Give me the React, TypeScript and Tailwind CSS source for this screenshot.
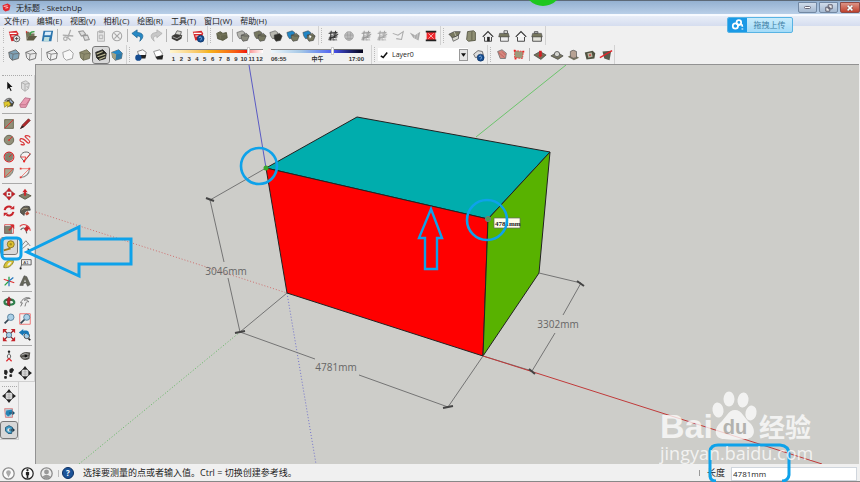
import type { ReactNode } from 'react';

const cube = 'M2 5 10 2 14 6 13 12 6 14 3 11Z';
const cubeEdges = 'M2 5 7 7 14 6M7 7 6 14';

function house(fill: string, body: string) {
  return (
    <>
      <path d="M4 8V14H12V8" fill={body} stroke="#444" strokeWidth="1.1" />
      <path d="M2 9 8 3 14 9" fill={fill} stroke="#333" strokeWidth="1.3" />
    </>
  );
}

function sandbox(color: string) {
  return (
    <>
      <path d="M4 3H13V7L11 9 13 13H3V10L5 7Z" fill={color} opacity=".5" />
      <path d="M3 5 13 4M4 10 13 9M6 2 5 13M11 2 9 13M3 12 14 6" stroke={color} strokeWidth="1.1" />
      <path d="M6 6H8M9 11H11" stroke="#eee" strokeWidth="1.3" />
    </>
  );
}

function solid(front: string, back: string) {
  return (
    <>
      <path d="M1 4 7 2 10 4 9 10 4 11 2 8Z" fill={back} stroke="#444" strokeWidth=".6" />
      <path d="M6 7 12 5 15 8 13 13 8 14 6 11Z" fill={front} stroke="#444" strokeWidth=".7" />
      <path d="M6 7 10 8 15 8" stroke="#333" strokeWidth=".5" />
    </>
  );
}

function styled(fill: string, edge = '#666') {
  return (
    <>
      <path d={cube} fill={fill} stroke={edge} />
      <path d={cubeEdges} stroke={edge} strokeWidth=".8" />
    </>
  );
}

const globe = (
  <>
    <circle cx="11" cy="11" r="4" fill="#164d91" stroke="#0b2c59" strokeWidth=".6" />
    <path d="M9 10 11 9 12 11 11 13" stroke="#8db9e6" strokeWidth="1" />
  </>
);

const icons: Record<string, ReactNode> = {
  New: (
    <>
      <path d="M2 3 11 2 13 5 12 13 5 14Z" fill="#d8282c" />
      <path d="M3 5 11 5M5 8H9" stroke="#fff" strokeWidth="1.3" />
      <circle cx="11" cy="11" r="3.6" fill="#eee" stroke="#555" />
      <path d="M11 9V13M9 11H13" stroke="#444" />
    </>
  ),
  Open: (
    <>
      <path d="M2 3H6L7 5H12V8H5L3 13Z" fill="#77745a" />
      <path d="M5 8H15L11 13H3Z" fill="#5f5c45" />
      <path d="M7 7C7 3 9 3 12 3" stroke="#349b3f" strokeWidth="1.6" />
      <path d="M2 2 4 3 3 5Z" fill="#d22" />
    </>
  ),
  Save: (
    <>
      <path d="M4 2H15L13 14H2Z" fill="#2b75ad" />
      <path d="M6 3H13L12 7H5Z" fill="#d9edfb" />
      <path d="M5 9H11L10 14H4Z" fill="#bdd" />
    </>
  ),
  Cut: (
    <>
      <path d="M11 1 8 9M2 7 14 8M7 9 11 13" stroke="#aaa" strokeWidth="1.5" />
      <circle cx="5" cy="11" r="2" stroke="#aaa" strokeWidth="1.3" />
    </>
  ),
  Copy: <path d="M2 3 7 2 10 6 5 8ZM7 8 12 7 14 12 9 13Z" fill="#ddd" stroke="#999" strokeWidth="1.2" />,
  Paste: (
    <>
      <path d="M4 3H12V14H4ZM6 2H10V4H6Z" fill="#e2e2e2" stroke="#b0b0b0" />
      <path d="M6 7H10V11H6Z" stroke="#b0b0b0" />
    </>
  ),
  Erase: (
    <>
      <circle cx="8" cy="8" r="5.4" stroke="#a5a5a5" strokeWidth="1.2" />
      <path d="M5 5 11 11M11 5 5 11" stroke="#a5a5a5" strokeWidth="1.3" />
    </>
  ),
  Undo: <path d="M1 5 7 1V4C14 4 16 9 10 14 12 9 10 8 7 8V10Z" fill="#2789c5" stroke="#1a6191" strokeWidth=".8" />,
  Redo: <path d="M15 5 9 1V4C2 4 0 9 6 14 4 9 6 8 9 8V10Z" fill="#c8c8c8" stroke="#aaa" strokeWidth=".8" />,
  Print: (
    <>
      <path d="M2 8 7 5 14 7 13 11 8 14 2 11Z" fill="#3b3a36" />
      <path d="M6 6 8 2 13 3 12 7Z" fill="#d4d4cf" stroke="#333" strokeWidth=".7" />
      <path d="M3 9 8 11 13 8" stroke="#aaa" />
    </>
  ),
  'Model info': (
    <>
      <path d="M2 3 12 2 14 5 11 12 5 13Z" fill="#d8282c" />
      <path d="M3 5 12 5M5 8H9" stroke="#fff" strokeWidth="1.4" />
      {globe}
    </>
  ),
  'Outer shell': (
    <>
      <path d="M2 5 6 3 9 5 13 4 14 10 9 13 3 11Z" fill="#67684f" stroke="#55563f" />
      <path d="M2 5 6 7 13 6M6 7V12" stroke="#7d7d62" strokeWidth=".8" />
    </>
  ),
  Intersect: solid('#8a8a7d', '#b5b5af'),
  Union: solid('#777860', '#777860'),
  Subtract: solid('#30302a', '#b8b8b0'),
  Trim: solid('#77785f', '#2186c5'),
  Split: (
    <>
      {solid('#77785f', '#2186c5')}
      <path d="M8 7 11 8 9 11Z" fill="#fff" />
    </>
  ),
  'From contours': sandbox('#333'),
  'From scratch': (
    <>
      <circle cx="8" cy="8" r="5" fill="#bbb" stroke="#aaa" />
      <path d="M3 7H13M4 11H12M6 3 7 13M10 3 9 13" stroke="#999" strokeWidth=".7" />
    </>
  ),
  Smoove: sandbox('#999'),
  Stamp: sandbox('#a5a5a5'),
  Drape: <path d="M2 5 8 7 14 3 12 12 6 11" stroke="#aaa" strokeWidth="1.2" />,
  'Add detail': (
    <>
      <path d="M2 4 8 7 14 3 12 13 6 10Z" fill="#aaa" />
      <path d="M8 7 7 11M11 5 10 12" stroke="#d7d7d7" strokeWidth=".7" />
    </>
  ),
  'Flip edge': (
    <>
      <path d="M3 3H13V13H3Z" fill="#ee252b" />
      <path d="M2 3H14M2 13H14" stroke="#222" strokeWidth="1.8" />
      <path d="M5 5 11 11M11 5 5 11" stroke="#f8bcbc" strokeWidth="1" />
    </>
  ),
  Iso: (
    <>
      <path d="M4 8 6 14 12 11V6L8 9Z" fill="#d8d8cf" stroke="#666" />
      <path d="M1 6 7 3 14 3 12 7 5 10Z" fill="#77775e" stroke="#444" strokeWidth=".8" />
      <path d="M7 3 9 8" stroke="#c4c4b3" />
    </>
  ),
  Top: (
    <>
      <path d="M4 3 11 2 13 4V13L5 14 3 12Z" fill="#8f8f74" stroke="#555542" />
      <path d="M9 3V13" stroke="#5f5f48" />
    </>
  ),
  Front: (
    <>
      {house('#eee', '#eee')}
      <path d="M7 9H10V14H7Z" fill="#222" />
    </>
  ),
  Right: (
    <>
      <path d="M4 8H13V14H4Z" fill="#eee" stroke="#555" />
      <path d="M8 2H12V5H8Z" fill="#eee" stroke="#555" />
      <path d="M3 5H13L14 9H2Z" fill="#777760" stroke="#444" strokeWidth=".7" />
    </>
  ),
  Back: house('#f7f7f7', '#f2f2f2'),
  Left: (
    <>
      <path d="M3 8H13V14H3Z" fill="#e2e2da" stroke="#444" />
      <path d="M5 3H9V5H5Z" fill="#ccc" stroke="#555" />
      <path d="M3 5H13L14 9H2Z" fill="#77775e" stroke="#444" strokeWidth=".7" />
    </>
  ),
  'X-ray': styled('#7fa3b8'),
  'Back edges': styled('#e9e9e9'),
  Wireframe: styled('none'),
  'Hidden line': <path d={cube} fill="#f8f8f8" stroke="#999" />,
  Shaded: styled('#8f8d6f', '#6c6a52'),
  Textured: (
    <>
      <path d={cube} fill="#25251e" stroke="#222" />
      <path d="M3 7 10 4M4 10 13 7M6 13 13 10" stroke="#b8b592" strokeWidth="1.4" />
    </>
  ),
  Monochrome: (
    <>
      {styled('#c7c6b4')}
      <path d="M2 5 10 2 14 6 7 7Z" fill="#2388c9" />
      <path d="M7 7 14 6 13 12 6 14Z" fill="#2f79a7" />
      <path d="M2 5 7 7 6 14 3 11Z" fill="#a3a284" />
    </>
  ),
  'Shadow settings': (
    <>
      <path d="M4 4 10 2 14 5 13 9 6 10Z" fill="#fafafa" stroke="#777" />
      <path d="M6 8 14 8 13 12 6 12Z" fill="#222" />
      <circle cx="5" cy="11" r="3.6" fill="#164d91" />
    </>
  ),
  Shadows: (
    <>
      <path d="M3 4 10 2 13 6 12 11 6 11Z" fill="#fff" stroke="#888" />
      <path d="M5 10 14 8 13 13 7 13Z" fill="#222" />
    </>
  ),
  'Layer manager': (
    <>
      <path d="M3 7 8 3 13 4 14 8 5 11Z" fill="#ddd" stroke="#666" />
      {globe}
    </>
  ),
  'Section plane': (
    <>
      <path d="M3 4 8 2 13 6 12 12 6 12Z" fill="#d5877e" stroke="#777" />
      <path d="M4 5 11 11M8 4 12 8" stroke="#b7524f" strokeWidth=".8" />
    </>
  ),
  'Section cuts': (
    <>
      <path d="M3 3 13 4 12 12 3 11Z" fill="#9c9a7b" stroke="#e33" strokeDasharray="2 1" />
      <path d="M2 2H4V4H2ZM12 3H14V5H12ZM3 11H5V13H3Z" fill="#e22" />
    </>
  ),
  'Drop in': (
    <>
      <path d="M1 8 8 4 15 8 9 13Z" fill="#747359" stroke="#444" strokeWidth=".8" />
      <path d="M7 3H10V8H11L8 11 6 8H7Z" fill="#cf2024" />
    </>
  ),
  'Joint push': (
    <>
      <path d="M1 9 8 5 15 9 9 13Z" fill="#77755f" stroke="#444" strokeWidth=".8" />
      <circle cx="8" cy="7" r="3" fill="#d5d5d0" stroke="#555" />
    </>
  ),
  Cylinder: (
    <>
      <path d="M2 10 8 7 15 11 9 14Z" fill="#77755f" />
      <path d="M5 4Q8 1 12 4V11Q8 13 5 10Z" fill="#b7a293" stroke="#555" strokeWidth=".8" />
    </>
  ),
  Face: (
    <>
      <path d="M2 5 11 3 14 6 13 12 4 13Z" fill="#4e5140" />
      <path d="M5 6 10 5 11 10 6 11Z" fill="#b9b29b" />
      <path d="M7 7H9V9H7Z" fill="#c44" />
    </>
  ),
  Slice: (
    <>
      <path d="M4 4 14 3 12 14 6 12Z" fill="#5a5c4d" />
      <path d="M1 11 15 3" stroke="#e5252a" strokeWidth="1.4" />
    </>
  ),
  Select: <path d="M6 3V12L8 10 10 14 11 13 9 9 12 9Z" fill="#111" />,
  Component: (
    <>
      <path d="M4 4 9 2 13 5 12 11 8 14 4 11Z" fill="#ddd" stroke="#aaa" />
      <path d="M4 4 8 6 13 5M8 6V14M10 8 11 10" stroke="#aaa" />
    </>
  ),
  Paint: (
    <>
      <path d="M5 5 10 3 14 7 12 12 7 12Z" fill="#45443a" />
      <path d="M3 6Q7 1 11 4" stroke="#777" strokeWidth="1.4" />
      <path d="M2 7 8 6 10 10 6 13 6 10 3 13Z" fill="#e2c92d" stroke="#796c1d" strokeWidth=".6" />
      <path d="M9 5 12 8" stroke="#98aaca" strokeWidth="2" />
    </>
  ),
  Eraser: (
    <>
      <path d="M2 10 8 2 14 3 9 13 3 13Z" fill="#e99bb2" stroke="#a95c75" strokeWidth=".8" />
      <path d="M2 10 9 10 14 3" stroke="#b96780" strokeWidth=".8" />
    </>
  ),
  Rectangle: (
    <>
      <path d="M3 3H13V13H3Z" fill="#918f77" stroke="#66644e" />
      <path d="M3 13 13 3" stroke="#e1262d" />
    </>
  ),
  Line: (
    <>
      <path d="M3 13 5 9 12 2 14 4 7 11Z" fill="#b3262a" stroke="#5e1b1b" strokeWidth=".8" />
      <path d="M2 14 5 10 7 11Z" fill="#222" />
    </>
  ),
  Circle: (
    <>
      <circle cx="8" cy="8" r="5.4" fill="#929079" stroke="#625f4d" />
      <path d="M8 8 12 4" stroke="#e22" />
      <circle cx="8" cy="8" r="1" fill="#e22" />
    </>
  ),
  Freehand: <path d="M3 13C10 15 7 11 4 10S2 5 6 7 11 13 13 11 8 5 8 4 12 2 14 5" stroke="#d83437" strokeWidth="1.3" />,
  Polygon: (
    <>
      <circle cx="8" cy="8" r="5.6" stroke="#d22" strokeWidth="1.2" />
      <path d="M8 3 12 5V10L8 13 4 11V5Z" fill="#85826a" stroke="#666" strokeWidth=".7" />
      <path d="M8 8 11 5" stroke="#e22" />
    </>
  ),
  Arc: (
    <>
      <path d="M3 8C3 1 13 1 14 5L7 13Z" fill="#f3f3f3" stroke="#555" />
      <path d="M3 8 9 8 7 13 14 4" stroke="#e33" />
      <circle cx="7" cy="13" r="1.2" fill="#e22" />
    </>
  ),
  Pie: (
    <>
      <path d="M3 13V3H13C13 8 9 13 3 13Z" fill="#aaa68e" stroke="#777" />
      <path d="M3 13 13 3H3Z" stroke="#e54b45" />
    </>
  ),
  'Two point arc': (
    <>
      <path d="M13 3C13 9 9 13 3 13" stroke="#888" strokeWidth="1.3" />
      <path d="M3 3H13L3 13" stroke="#ee7770" />
      <path d="M2 2H4V4H2ZM12 2H14V4H12ZM2 12H4V14H2Z" fill="#e43b37" />
    </>
  ),
  Move: (
    <>
      <path d="M8 1 11 5H5ZM8 15 11 11H5ZM1 8 5 5V11ZM15 8 11 5V11Z" fill="#cf2027" stroke="#842023" strokeWidth=".5" />
      <path d="M7 7H9V9H7Z" fill="#a22" />
    </>
  ),
  'Push pull': (
    <>
      <path d="M1 10 8 7 15 10 8 14Z" fill="#83816a" stroke="#555440" />
      <path d="M8 2 11 6H9V10H7V6H5Z" fill="#ce2228" />
    </>
  ),
  Rotate: (
    <>
      <path d="M3 7A5 5 0 0 1 11 4M13 9A5 5 0 0 1 5 12" stroke="#c8232a" strokeWidth="2.4" />
      <path d="M9 6H14V2ZM7 10H2V14Z" fill="#c8232a" />
    </>
  ),
  'Follow me': (
    <>
      <path d="M13 3C6 1 2 5 3 10L7 13C7 9 9 7 14 7Z" fill="#5e5a4e" stroke="#444" />
      <path d="M4 7Q6 4 11 5" stroke="#a9a28a" />
      <path d="M8 11 11 8 13 11 10 13Z" fill="#b64c39" />
    </>
  ),
  Scale: (
    <>
      <path d="M3 3H13V13H3Z" fill="#f1eded" stroke="#d55" />
      <path d="M3 5H11V13H3Z" fill="#85826b" stroke="#666" strokeWidth=".8" />
      <path d="M7 9 11 5 9 3H14V8L12 6 9 10Z" fill="#d3282d" />
    </>
  ),
  Offset: (
    <>
      <path d="M2 5C6 1 13 3 14 10" stroke="#dc4144" strokeWidth="1.3" />
      <path d="M3 9C6 5 9 7 10 13" stroke="#666" strokeWidth="1.3" />
      <path d="M7 8 10 4 13 7 10 11Z" fill="#c92229" />
    </>
  ),
  'Tape measure': (
    <>
      <path d="M2 13 9 11 8 8" stroke="#9c7919" strokeWidth="1.8" />
      <circle cx="10" cy="6" r="4" fill="#dec12e" stroke="#86712a" />
      <circle cx="10" cy="6" r="1.4" fill="#a38c22" />
    </>
  ),
  Dimension: (
    <>
      <path d="M3 9 9 2 14 8M5 11 12 5" stroke="#777" />
      <path d="M11 11 14 14" stroke="#333" strokeWidth="1.5" />
    </>
  ),
  Protractor: (
    <>
      <path d="M2 12C2 7 8 1 13 4 14 7 8 14 2 12Z" fill="#d8c435" stroke="#83792d" />
      <path d="M6 10C6 8 9 5 11 6 10 8 8 10 6 10Z" fill="#efefe9" />
    </>
  ),
  Text: (
    <>
      <path d="M4 3H15V9H4ZM4 9 3 12" stroke="#555" fill="#eee" />
      <text x="6" y="8" fontSize="5" fontFamily="Liberation Sans" fill="#333">A1</text>
      <circle cx="3" cy="13" r="1.2" fill="#222" />
    </>
  ),
  Axes: (
    <>
      <path d="M8 8V3M8 8 3 13" stroke="#27a34b" strokeWidth="1.5" />
      <path d="M2 6 8 8 14 10" stroke="#d33" strokeWidth="1.5" />
      <path d="M8 8 13 4M8 8V14" stroke="#2478bd" strokeWidth="1.4" />
    </>
  ),
  '3D text': (
    <>
      <path d="M7 2 10 3 14 12 11 14 9 10 6 11 6 13H2Z" fill="#66675b" stroke="#444" strokeWidth=".6" />
      <path d="M8 6 9 9H7Z" fill="#ddd" />
    </>
  ),
  Orbit: (
    <>
      <path d="M3 9C1 4 13 4 14 8 15 12 4 12 3 9" stroke="#2f7f4c" strokeWidth="2.6" />
      <path d="M8 2 11 6H9V13L6 11V6H5Z" fill="#b3222d" stroke="#632127" strokeWidth=".6" />
    </>
  ),
  Pan: <path d="M3 13 5 9 3 9C4 5 10 1 14 4 10 4 9 4 7 6 10 5 12 6 12 8 10 7 9 8 8 13" fill="#eee" stroke="#777" strokeWidth="1.1" />,
  Zoom: (
    <>
      <path d="M3 13 8 8" stroke="#344654" strokeWidth="2" />
      <circle cx="10" cy="6" r="3.7" fill="#a9cfe7" stroke="#537b98" />
    </>
  ),
  'Zoom window': (
    <>
      <path d="M2 2H14V14H2Z" stroke="#e66" />
      <path d="M3 13 8 8" stroke="#344654" strokeWidth="2" />
      <circle cx="10" cy="6" r="3.5" fill="#a9cfe7" stroke="#537b98" />
    </>
  ),
  'Zoom extents': (
    <>
      <path d="M3 3 13 13M13 3 3 13" stroke="#8b2025" strokeWidth="1.5" />
      <path d="M1 1H6L1 6ZM15 1H10L15 6ZM1 15H6L1 10ZM15 15H10L15 10Z" fill="#c52229" />
      <circle cx="8" cy="8" r="3" fill="#a9cfe7" stroke="#517895" />
    </>
  ),
  'Previous view': (
    <>
      <circle cx="10" cy="9" r="3.2" fill="#a9cfe7" stroke="#444" />
      <path d="M12 12 14 14" stroke="#222" strokeWidth="2" />
      <path d="M1 5 6 1V3C11 2 14 4 12 9 10 6 8 6 6 7V9Z" fill="#1777b6" />
    </>
  ),
  'Position camera': (
    <>
      <circle cx="8" cy="3" r="1.4" fill="#222" />
      <path d="M8 5 10 8 9 11H7L6 8Z" fill="#f2f2f2" stroke="#555" />
      <path d="M5 14 8 11 11 14" stroke="#dd272d" strokeWidth="1.4" />
    </>
  ),
  'Look around': (
    <>
      <path d="M2 8Q5 2 14 4L13 11Q6 15 2 8Z" fill="#55534d" />
      <path d="M4 7Q8 4 12 6M5 10Q8 11 12 9" stroke="#bbb" />
      <circle cx="9" cy="8" r="1.5" fill="#111" />
    </>
  ),
  Walk: <path d="M3 5Q6 4 6 7L5 10 3 9ZM3 12 5 12 5 14 3 14ZM9 4Q13 1 13 5L11 8 9 7ZM9 10H11V12L9 12Z" fill="#222" stroke="#222" />,
  'Section view': (
    <>
      <circle cx="8" cy="8" r="4.6" fill="#eee" stroke="#444" />
      <path d="M8 2V14M2 8H14M5 6H11M5 10H11" stroke="#999" strokeWidth=".7" />
      <path d="M8 0 11 4H5ZM8 16 11 12H5ZM0 8 4 5V11ZM16 8 12 5V11Z" fill="#222" />
    </>
  ),
  'Display planes': (
    <>
      <path d="M3 3H12V13H4Z" fill="#baced7" stroke="#d66" strokeWidth=".8" />
      <path d="M5 5 12 4 11 9 7 12 4 9Z" fill="#2583b4" />
      <path d="M8 8H14M12 6 14 8 12 10" stroke="#165270" strokeWidth="1.2" />
    </>
  ),
  'Display cuts': (
    <>
      <path d="M4 5 8 3 12 5 11 12 7 12 4 9Z" fill="#3f9cc7" stroke="#235674" />
      <circle cx="8" cy="8" r="2" fill="#e7e7e7" />
      <path d="M8 8H14M12 6 14 8 12 10" stroke="#1b3648" strokeWidth="1.2" />
    </>
  ),
};

function Tool({ name, active = false }: { name: string; active?: boolean }) {
  return (
    <button
      type="button"
      aria-label={name}
      className={
        active
          ? 'relative flex h-4 w-4 shrink-0 items-center justify-center rounded-xs bg-[#d8d8d8] outline outline-1 outline-[#777]'
          : 'flex h-4 w-4 shrink-0 items-center justify-center'
      }
    >
      <svg viewBox="0 0 16 16" className="h-[14px] w-[14px]" fill="none">
        {icons[name]}
      </svg>
    </button>
  );
}

function Group({ names, width = '', active }: { names: string[]; width?: string; active?: string }) {
  return (
    <div className={`flex shrink-0 justify-between ${width}`}>
      {names.map((name) => (
        <Tool key={name} name={name} active={name === active} />
      ))}
    </div>
  );
}

function Divider() {
  return (
    <div className="flex w-[5px] shrink-0 justify-center">
      <div className="h-[13px] w-px bg-[#b5b5b5]" />
    </div>
  );
}

// end of one floating bar and the dotted grip of the next one
function Grip() {
  return (
    <div className="flex h-full w-[8px] shrink-0 items-center gap-[2px] pl-px">
      <div className="h-full w-px bg-[#d2d2d2]" />
      <div className="h-[15px] border-l border-dotted border-[#bbb]" />
    </div>
  );
}

function Palette({ names, height, active }: { names: string[]; height: string; active?: string }) {
  return (
    <div className={`grid grid-cols-2 content-between justify-items-center px-px ${height}`}>
      {names.map((name) => (
        <Tool key={name} name={name} active={name === active} />
      ))}
    </div>
  );
}

const menus = ['文件(F)', '编辑(E)', '视图(V)', '相机(C)', '绘图(R)', '工具(T)', '窗口(W)', '帮助(H)'];

const palettes = [
  { height: 'h-[33px]', names: ['Select', 'Component', 'Paint', 'Eraser'] },
  { height: 'h-[65px]', names: ['Rectangle', 'Line', 'Circle', 'Freehand', 'Polygon', 'Arc', 'Pie', 'Two point arc'] },
  {
    height: 'h-[103px]',
    names: ['Move', 'Push pull', 'Rotate', 'Follow me', 'Scale', 'Offset', 'Tape measure', 'Dimension', 'Protractor', 'Text', 'Axes', '3D text'],
  },
  { height: 'h-[49px]', names: ['Orbit', 'Pan', 'Zoom', 'Zoom window', 'Zoom extents', 'Previous view'] },
  { height: 'h-[33px]', names: ['Position camera', 'Look around', 'Walk', 'Section view'] },
];

function TitleBar() {
  return (
    <div className="flex h-[14px] items-center border-t border-[#5d6a78] bg-linear-to-b from-[#94b1d1] to-[#b9cfe8] pl-[2px]">
      <svg viewBox="0 0 16 16" className="mr-[5px] h-[9px] w-[9px]" fill="none">
        <path d="M1 4 10 1 15 4 13 13 6 15 2 12Z" fill="#e2242c" />
        <path d="M3 6 10 5M6 9 11 8" stroke="#fff" strokeWidth="1.4" />
      </svg>
      <h1 className="flex-1 text-[8px] leading-[12px] text-[#222]">无标题 - SketchUp</h1>
      <div className="flex gap-[2px]">
        <button type="button" aria-label="Minimize" className="flex h-[11px] w-[19px] items-center justify-center rounded-b-xs border border-[#7288a3] bg-linear-to-b from-[#d0dcea] to-[#a4b8d0]">
          <span className="h-[3px] w-[7px] rounded-xs border border-[#667] bg-white" />
        </button>
        <button type="button" aria-label="Restore" className="flex h-[11px] w-[19px] items-center justify-center rounded-b-xs border border-[#7288a3] bg-linear-to-b from-[#d0dcea] to-[#a4b8d0]">
          <svg viewBox="0 0 10 10" className="h-[8px] w-[8px]" fill="#eee" stroke="#556" strokeWidth="1.2">
            <path d="M4 1H9V6H4ZM1 4H6V9H1Z" />
          </svg>
        </button>
        <button type="button" aria-label="Close" className="flex h-[11px] w-[20px] items-center justify-center rounded-b-xs border border-[#8c4a45] bg-linear-to-b from-[#dc9386] to-[#bf3f2c]">
          <svg viewBox="0 0 10 10" className="h-[8px] w-[8px]">
            <path d="M2 2 8 8M8 2 2 8" stroke="#644" strokeWidth="3.2" />
            <path d="M2 2 8 8M8 2 2 8" stroke="#fff" strokeWidth="2" />
          </svg>
        </button>
      </div>
    </div>
  );
}

function SunSliders() {
  return (
    <>
      <div className="ml-[4px] w-[93px] shrink-0">
        <div className="flex h-[8px] items-center">
          <div className="h-[4px] w-[77px] border-t border-[#888] bg-linear-to-r from-[#fff6cf] via-[#f5b51d] to-[#f20d0d]" />
          <div className="h-[8px] w-[3px] border border-[#ccc] bg-white" />
          <div className="h-[4px] w-[13px] border-t border-[#888] bg-linear-to-r from-[#f79b9b] to-[#fff]" />
        </div>
        <div className="flex justify-between font-['Liberation_Sans'] text-[6px] leading-[8px] font-bold text-[#333]">
          {['1', '2', '3', '4', '5', '6', '7', '8', '9', '10', '11', '12'].map((month) => (
            <span key={month} className="w-[7px] text-center">{month}</span>
          ))}
        </div>
      </div>
      <div className="ml-[8px] w-[93px] shrink-0">
        <div className="flex h-[8px] items-center">
          <div className="h-[4px] w-[60px] border-t border-[#888] bg-linear-to-r from-[#eef7fb] via-[#a5c7e6] to-[#5564ee]" />
          <div className="h-[8px] w-[3px] border border-[#ccc] bg-white" />
          <div className="h-[4px] w-[29px] border-t border-[#666] bg-linear-to-r from-[#4650e8] to-[#05051c]" />
        </div>
        <div className="flex justify-between font-['Liberation_Sans','Noto_Sans_CJK_SC',sans-serif] text-[6px] leading-[8px] font-bold text-[#333]">
          <span>06:55</span>
          <span>中午</span>
          <span>17:00</span>
        </div>
      </div>
    </>
  );
}

function Toolbars() {
  return (
    <div className="overflow-hidden bg-[#f0f0f0]">
      <div className="flex h-[19px] items-center pl-[3px]">
        <div className="mr-[2px] h-[15px] border-l border-dotted border-[#bbb]" />
        <Group names={['New', 'Open', 'Save']} width="w-[49px]" />
        <Divider />
        <Group names={['Cut', 'Copy', 'Paste', 'Erase']} width="w-[65px]" />
        <Divider />
        <Group names={['Undo', 'Redo']} width="w-[34px]" />
        <Divider />
        <Group names={['Print']} />
        <Divider />
        <Group names={['Model info']} />
        <Grip />
        <Group names={['Outer shell']} />
        <Divider />
        <Group names={['Intersect', 'Union', 'Subtract', 'Trim', 'Split']} width="w-[82px]" />
        <Grip />
        <Group names={['From contours', 'From scratch', 'Smoove', 'Stamp', 'Drape', 'Add detail', 'Flip edge']} width="w-[114px]" />
        <Grip />
        <Group names={['Iso', 'Top', 'Front', 'Right', 'Back', 'Left']} width="w-[98px]" />
        <div className="h-full w-px bg-[#d2d2d2]" />
      </div>
      <div className="flex h-[19px] items-center pl-[3px]">
        <div className="mr-[2px] h-[15px] border-l border-dotted border-[#bbb]" />
        <Group names={['X-ray', 'Back edges']} width="w-[33px]" />
        <Divider />
        <Group names={['Wireframe', 'Hidden line', 'Shaded', 'Textured', 'Monochrome']} width="w-[81px]" active="Textured" />
        <Grip />
        <Group names={['Shadow settings', 'Shadows']} width="w-[33px]" />
        <SunSliders />
        <div className="ml-[6px] flex h-full">
          <Grip />
        </div>
        <div className="relative flex h-[13px] w-[90px] shrink-0 items-center bg-white">
          <svg viewBox="0 0 10 10" className="ml-[2px] h-[8px] w-[8px]" fill="none">
            <path d="M1 6 4 8 9 2" stroke="#111" strokeWidth="2" />
          </svg>
          <select aria-label="Layer" className="h-[13px] flex-1 appearance-none pl-[4px] text-[7px] leading-[13px] text-[#222]">
            <option>Layer0</option>
          </select>
          <span className="pointer-events-none absolute right-0 flex h-[12px] w-[9px] items-center justify-center border border-[#999] bg-[#e6e6e6]">
            <svg viewBox="0 0 6 4" className="h-[4px] w-[5px]">
              <path d="M0 0H6L3 4Z" fill="#111" />
            </svg>
          </span>
        </div>
        <Group names={['Layer manager']} width="ml-[2px]" />
        <Grip />
        <Group names={['Section plane', 'Section cuts']} width="w-[33px]" />
        <Divider />
        <Group names={['Drop in', 'Joint push', 'Cylinder', 'Face', 'Slice']} width="w-[82px]" />
        <div className="h-full w-px bg-[#d2d2d2]" />
      </div>
    </div>
  );
}

function Sidebar() {
  return (
    <aside className="w-[35px] shrink-0 bg-[#f0f0f0] pt-[11px]">
      <div className="border-r border-b border-[#d0d0d0]">
        <div className="mx-[2px] mb-[2px] border-t border-dotted border-[#aaa]" />
        {palettes.map((palette, i) => (
          <div key={i}>
            {i > 0 && <div className="mx-[2px] my-[2px] h-px bg-[#aaa]" />}
            <Palette names={palette.names} height={palette.height} active="Tape measure" />
          </div>
        ))}
      </div>
      <div className="flex w-[19px] flex-col items-center gap-px border-r border-b border-[#d0d0d0] pt-[4px] pb-px">
        <div className="w-[15px] border-t border-dotted border-[#aaa]" />
        <Tool name="Section view" />
        <Tool name="Display planes" />
        <Tool name="Display cuts" active />
      </div>
    </aside>
  );
}

function Viewport() {
  return (
    <svg viewBox="36 65 823 399" className="block h-auto w-full bg-[#cdcdc9]" fill="none">
      <g strokeWidth="1">
        <path d="M249 65 266 168" stroke="#5a5ac4" />
        <path d="M476 137 566 65" stroke="#6cc46c" />
        <path d="M36 212 287 293" stroke="#cf7070" strokeDasharray="1 2" />
        <path d="M287 293 316 464" stroke="#7373cc" strokeDasharray="1 2" />
        <path d="M240 332 79 464" stroke="#62b862" strokeDasharray="1 2" />
      </g>
      <g stroke="#222" strokeWidth="1" strokeLinejoin="round">
        <path d="M266 168 357 117 550 152 488 219Z" fill="#00adad" />
        <path d="M266 168 488 219 483 356 287 293Z" fill="#ff0000" />
        <path d="M488 219 550 152 539 273 483 356Z" fill="#58b200" />
      </g>
      <g stroke="#747474" strokeWidth="1">
        <path d="M266 168 210 200 224 262M228 278 240 332 287 293" />
        <path d="M240 332 315 359M359 375 448 407 483 356" />
        <path d="M539 273 581 283 563 315M555 333 532 371 483 356" />
      </g>
      <path d="M483 356 822 464" stroke="#c03a3a" />
      <path d="M206 198 214 201M235 333 245 331M443 408 453 406M577 281 584 286M529 369 535 374" stroke="#444" strokeWidth="2" />
      <g fill="#666" fontSize="10" fontFamily="'Open Sans', sans-serif" textAnchor="middle">
        <text x="226" y="275">3046mm</text>
        <text x="336" y="371">4781mm</text>
        <text x="558" y="328">3302mm</text>
      </g>
      <circle cx="266" cy="168" r="2.5" fill="#39a52c" />
      <circle cx="488" cy="219" r="2.6" fill="#4c9a55" stroke="#777" />
      <path d="M494 218H520V228H494Z" fill="#fffde9" stroke="#666" strokeWidth=".7" />
      <text x="495" y="226" fontSize="7" fontWeight="bold" fontFamily="'Liberation Serif', serif" fill="#222">4781mm</text>
    </svg>
  );
}

function StatusBar() {
  return (
    <footer className="flex h-[18px] items-center border-b border-[#888] bg-[#f0f0f0] pt-px pl-[2px] text-[9px] text-[#222]">
      <button type="button" aria-label="Location" className="mr-[6px]">
        <svg viewBox="0 0 16 16" className="h-[13px] w-[13px]" fill="#fafafa">
          <circle cx="8" cy="8" r="7" stroke="#888" strokeWidth="1.5" />
          <path d="M8 13 5 7A3 3 0 1 1 11 7Z" fill="#aaa" />
        </svg>
      </button>
      <button type="button" aria-label="Credits" className="mr-[6px]">
        <svg viewBox="0 0 16 16" className="h-[13px] w-[13px]" fill="#fafafa">
          <circle cx="8" cy="8" r="7" stroke="#222" strokeWidth="1.5" />
          <circle cx="8" cy="4" r="1.4" fill="#222" />
          <path d="M6 6H10V10H9V14H7V10H6Z" fill="#222" />
        </svg>
      </button>
      <button type="button" aria-label="Account" className="mr-[5px]">
        <svg viewBox="0 0 16 16" className="h-[13px] w-[13px]" fill="#eee">
          <circle cx="8" cy="8" r="7" stroke="#888" strokeWidth="1.5" />
          <circle cx="8" cy="6" r="3" fill="#999" />
          <path d="M3 12Q8 7 13 12L8 15Z" fill="#999" />
        </svg>
      </button>
      <div className="mr-[3px] h-[7px] w-px bg-[#bbb]" />
      <button type="button" aria-label="Help" className="mr-[9px] flex h-[12px] w-[12px] items-center justify-center rounded-full border border-[#0c2f61] bg-[#1c5499] text-[8px] leading-none font-bold text-white">
        ?
      </button>
      <p className="flex-1 whitespace-nowrap">选择要测量的点或者输入值。Ctrl = 切换创建参考线。</p>
      <div className="mr-[7px] h-[6px] w-px bg-[#999]" />
      <label htmlFor="length" className="mr-[6px]">长度</label>
      <input id="length" type="text" defaultValue="4781mm" className="mt-px mr-[3px] h-[14px] w-[126px] border border-[#d0d6dd] bg-white px-px text-[8px]" />
    </footer>
  );
}

function Watermark() {
  return (
    <g fill="#fff" opacity=".75">
      <g fontFamily="'Liberation Sans', 'Noto Sans CJK SC', sans-serif" fontWeight="bold">
        <text x="660" y="438" fontSize="34">Bai</text>
        <text x="759" y="437" fontSize="26">经验</text>
      </g>
      <ellipse cx="718" cy="410" rx="5.5" ry="7.5" transform="rotate(-10 718 410)" />
      <ellipse cx="729" cy="399" rx="5.5" ry="7.5" />
      <ellipse cx="743" cy="400" rx="5.5" ry="7.5" transform="rotate(8 743 400)" />
      <ellipse cx="751" cy="413" rx="5.5" ry="7.5" transform="rotate(12 751 413)" />
      <path d="M735 410C742 410 744 418 750 423 757 430 754 439 746 439 740 440 730 440 724 439 715 439 713 430 720 423 726 418 728 410 735 410Z" />
      <text x="735" y="434" fontSize="20" fontWeight="bold" textAnchor="middle" fontFamily="'Liberation Sans', sans-serif" fill="#a9a9a6">du</text>
      <text x="660" y="460" fontSize="18" fontFamily="'Open Sans', sans-serif">jingyan.baidu.com</text>
    </g>
  );
}

// hand-drawn marks that run across the panels
function Annotations() {
  return (
    <svg viewBox="0 0 860 482" className="pointer-events-none absolute inset-x-0 top-0 h-auto w-full" fill="none">
      <circle cx="543" cy="-13" r="19" fill="#1fc71f" />
      <g stroke="#0ea2ea" strokeWidth="3">
        <circle cx="259" cy="166" r="18" strokeWidth="2.6" />
        <circle cx="487" cy="220" r="20" strokeWidth="2.6" />
        <path d="M431 209 442 238H437V269H425V238H419Z" strokeWidth="2.4" />
        <path d="M27 252 79 227V239H131V264H79V276Z" />
        <rect x="2" y="238" width="19" height="21" rx="4" />
        <path d="M716 481Q710 481 710 475V451Q711 445 718 445H780Q789 446 789 454V475Q788 481 782 481" />
      </g>
      <Watermark />
    </svg>
  );
}

export default function App() {
  return (
    <main className="relative flex min-h-screen flex-col overflow-hidden bg-[#f0f0f0] font-['Open_Sans','Noto_Sans_CJK_SC',sans-serif]">
      <TitleBar />
      <nav className="flex h-[12px] items-center gap-[8px] border-t-2 border-[#f7faff] bg-linear-to-b from-[#e9eef8] to-[#d5ddef] pl-[4px]">
        {menus.map((menu) => (
          <button key={menu} type="button" className="text-[8px] leading-[10px] whitespace-nowrap text-[#222]">
            {menu}
          </button>
        ))}
      </nav>
      <Toolbars />
      <div className="flex flex-1">
        <Sidebar />
        <div className="mr-px min-w-0 flex-1 border-t border-l border-[#929292] bg-[#cdcdc9]">
          <Viewport />
        </div>
      </div>
      <StatusBar />
      <button type="button" className="absolute top-[17px] right-[67px] flex h-[16px] w-[66px] items-center overflow-hidden rounded-xs border border-[#58b3e3] bg-linear-to-b from-[#c9ecfc] to-[#a3dbf8] text-[8px] text-[#3f7fa6]">
        <span className="flex h-full w-[19px] items-center justify-center bg-[#1b9ae6]">
          <svg viewBox="0 0 16 16" className="h-[14px] w-[14px]" fill="none" stroke="#fff" strokeWidth="2">
            <circle cx="5" cy="9" r="3" />
            <circle cx="9" cy="5" r="2.6" />
            <path d="M8 9Q13 5 13 10M13 12V13" />
          </svg>
        </span>
        <span className="flex-1 text-center">拖拽上传</span>
      </button>
      <Annotations />
    </main>
  );
}
